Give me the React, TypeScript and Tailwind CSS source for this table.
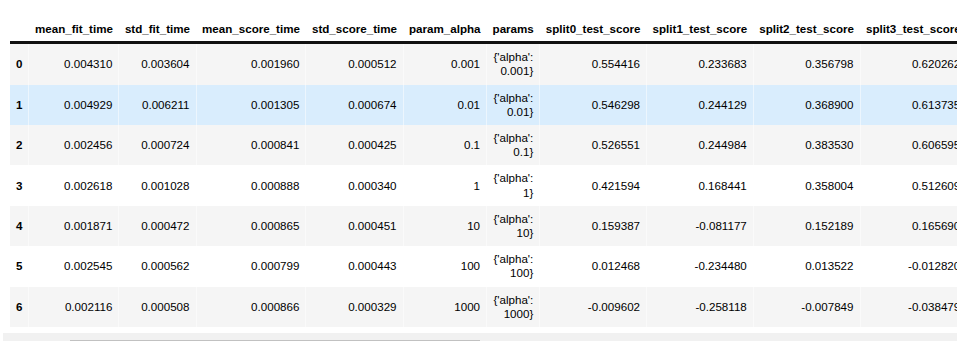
import React from "react";

const headers = [
  "mean_fit_time",
  "std_fit_time",
  "mean_score_time",
  "std_score_time",
  "param_alpha",
  "params",
  "split0_test_score",
  "split1_test_score",
  "split2_test_score",
  "split3_test_score",
  "split4_test_score",
];

const rows: string[][] = [
  ["0.004310", "0.003604", "0.001960", "0.000512", "0.001", "{'alpha': 0.001}", "0.554416", "0.233683", "0.356798", "0.620262", "0.459301"],
  ["0.004929", "0.006211", "0.001305", "0.000674", "0.01", "{'alpha': 0.01}", "0.546298", "0.244129", "0.368900", "0.613735", "0.462032"],
  ["0.002456", "0.000724", "0.000841", "0.000425", "0.1", "{'alpha': 0.1}", "0.526551", "0.244984", "0.383530", "0.606595", "0.468846"],
  ["0.002618", "0.001028", "0.000888", "0.000340", "1", "{'alpha': 1}", "0.421594", "0.168441", "0.358004", "0.512609", "0.387980"],
  ["0.001871", "0.000472", "0.000865", "0.000451", "10", "{'alpha': 10}", "0.159387", "-0.081177", "0.152189", "0.165690", "0.119726"],
  ["0.002545", "0.000562", "0.000799", "0.000443", "100", "{'alpha': 100}", "0.012468", "-0.234480", "0.013522", "-0.012820", "-0.004838"],
  ["0.002116", "0.000508", "0.000866", "0.000329", "1000", "{'alpha': 1000}", "-0.009602", "-0.258118", "-0.007849", "-0.038479", "-0.022781"],
];

export default function App() {
  return (
    <div
      className="bg-white w-[962px] pt-[14px] text-black"
      style={{ fontFamily: '"Liberation Sans", Arial, Helvetica, sans-serif' }}
    >
      <div className="ml-[3px] w-[954px] overflow-hidden">
        <table className="ml-[7px] w-min border-collapse border-spacing-0 text-[11.6px] leading-[14.2px]">
          <thead>
            <tr>
              <th className="border-b-[3px] border-[#111] px-[6px] pt-[8px] pb-[5px] text-right font-bold"></th>
              {headers.map((h) => (
                <th
                  key={h}
                  className="border-b-[3px] border-[#111] px-[6px] pt-[8px] pb-[5px] text-right align-bottom font-bold"
                >
                  {h}
                </th>
              ))}
            </tr>
          </thead>
          <tbody>
            {rows.map((r, i) => (
              <tr
                key={i}
                className={
                  i === 1 ? "bg-[#d9edfd]" : i % 2 === 0 ? "bg-[#f5f5f5]" : "bg-white"
                }
              >
                <th className="px-[6px] py-[6px] text-left align-middle font-bold border-r border-white/50">
                  {i}
                </th>
                {r.map((c, j) => (
                  <td
                    key={j}
                    className="px-[6px] py-[6px] text-right align-middle font-normal border-r border-white/50"
                  >
                    {c}
                  </td>
                ))}
              </tr>
            ))}
          </tbody>
        </table>
      </div>
      <div className="mt-[6px] ml-[3px] w-[954px] h-[17px] bg-[#f1f1f1] pt-[7px] pl-[67px]">
        <div className="w-[410px] h-[8px] bg-[#c1c1c1]"></div>
      </div>
    </div>
  );
}
